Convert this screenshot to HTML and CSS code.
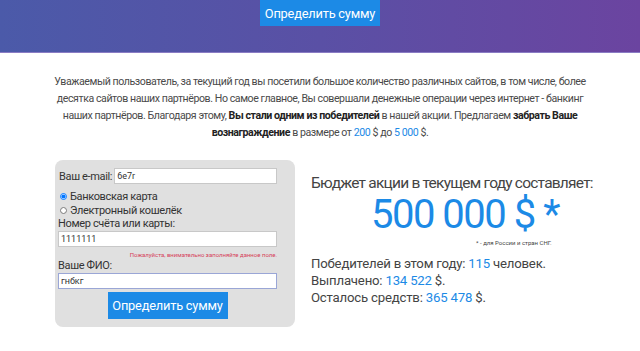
FILE: index.html
```html
<!DOCTYPE html>
<html lang="ru">
<head>
    <meta charset="UTF-8">
    <meta name="viewport" content="width=device-width, initial-scale=1.0">
    <title>Определить сумму</title>
    <link rel="stylesheet" href="styles.css">
</head>
<body>
    <header class="top-band">
        <button class="btn top-btn">Определить сумму</button>
    </header>
    <main>
        <p class="intro">
            Уважаемый пользователь, за текущий год вы посетили большое количество различных сайтов, в том числе, более<br>
            десятка сайтов наших партнёров. Но самое главное, Вы совершали денежные операции через интернет - банкинг<br>
            наших партнёров. Благодаря этому, <strong>Вы стали одним из победителей</strong> в нашей акции. Предлагаем <strong>забрать Ваше</strong><br>
            <strong>вознаграждение</strong> в размере от <span class="blue">200</span> $ до <span class="blue">5 000</span> $.
        </p>
        <div class="content">
            <form class="form-box" onsubmit="return false">
                <div class="row-email">
                    <label>Ваш e-mail:</label>
                    <input type="text" class="field" value="6e7r">
                </div>
                <label class="radio first"><input type="radio" name="pay" checked> Банковская карта</label>
                <label class="radio"><input type="radio" name="pay"> Электронный кошелёк</label>
                <label class="lbl">Номер счёта или карты:</label>
                <input type="text" class="field" value="1111111">
                <div class="error">Пожалуйста, внимательно заполняйте данное поле.</div>
                <label class="lbl">Ваше ФИО:</label>
                <input type="text" class="field focused" value="гнбкг">
                <div class="btn-row">
                    <button class="btn form-btn">Определить сумму</button>
                </div>
            </form>
            <div class="budget">
                <div class="budget-title">Бюджет акции в текущем году составляет:</div>
                <div class="budget-sum">500 000 $ *</div>
                <div class="note">* - для России и стран СНГ.</div>
                <div class="stats">
                    <div class="stat">Победителей в этом году: <span class="blue">115</span> человек.</div>
                    <div class="stat">Выплачено: <span class="blue">134 522</span> $.</div>
                    <div class="stat">Осталось средств: <span class="blue">365 478</span> $.</div>
                </div>
            </div>
        </div>
    </main>
</body>
</html>
```

FILE: styles.css
```css
body {
    font-family: Roboto, 'Noto Sans', sans-serif;
    margin: 0;
    padding: 0;
    background-color: #fff;
    color: #4a4a4a;
}
.top-band {
    height: 52px;
    background: linear-gradient(90deg, #4b5aa9 0%, #5a50a5 50%, #6b44a0 100%);
    border-bottom: 1px solid #8a7cc4;
    display: flex;
    justify-content: center;
    align-items: flex-start;
}
.btn {
    background-color: #1c8ae6;
    color: #fff;
    border: none;
    font-family: inherit;
    cursor: pointer;
    padding: 0;
    letter-spacing: -0.2px;
}
.top-btn {
    width: 120px;
    height: 26px;
    font-size: 12.8px;
}
main {
    padding: 0 40px;
}
.intro {
    margin: 20px 0 0;
    text-align: center;
    font-size: 10.6px;
    letter-spacing: -0.43px;
    line-height: 17px;
    white-space: nowrap;
    color: #4a4a4a;
}
.intro strong {
    color: #222;
    font-weight: 700;
}
.blue {
    color: #1c8ae6;
}
.content {
    display: flex;
    margin-top: 19px;
    padding-left: 15px;
}
.form-box {
    flex: none;
    width: 240px;
    height: 167px;
    box-sizing: border-box;
    background-color: #e0e0e0;
    border-radius: 8px;
    padding: 8px 18px 0 3px;
    font-size: 11px;
    letter-spacing: -0.35px;
    color: #333;
    display: flex;
    flex-direction: column;
}
.row-email {
    display: flex;
    align-items: center;
    padding-left: 1px;
}
.row-email label {
    margin-right: 2px;
}
.field {
    height: 16px;
    box-sizing: border-box;
    border: 1px solid #c8c8c8;
    background: #fff;
    font-family: inherit;
    font-size: 9px;
    letter-spacing: 0;
    padding: 0 2px;
    color: #333;
    flex: none;
    min-width: 0;
}
.row-email .field {
    flex: 1;
}
.field.focused {
    border-color: #9aa6d6;
}
.radio {
    display: flex;
    align-items: center;
    height: 14px;
    padding-left: 1px;
}
.radio.first {
    margin-top: 5px;
}
.radio input {
    width: 7px;
    height: 7px;
    margin: 0 3px 0 1px;
}
.lbl {
    line-height: 14px;
}
.error {
    text-align: right;
    font-size: 6px;
    letter-spacing: 0;
    color: #d6405a;
    height: 9px;
    line-height: 9px;
    margin-top: 3px;
    overflow: hidden;
}
.btn-row {
    display: flex;
    justify-content: center;
    margin-top: 3px;
}
.form-btn {
    width: 120px;
    height: 27px;
    font-size: 12.8px;
}
.budget {
    margin-left: 16px;
    padding-top: 13px;
    color: #444;
    white-space: nowrap;
}
.budget-title {
    font-size: 15.5px;
    letter-spacing: -0.78px;
    line-height: 20px;
}
.budget-sum {
    font-size: 40px;
    letter-spacing: -1.5px;
    line-height: 40px;
    color: #1c8ae6;
    margin: 2px 0 0 60px;
}
.note {
    font-size: 6px;
    margin-left: 165px;
    line-height: 10px;
    margin-top: 3px;
}
.stats {
    margin-top: 7px;
}
.stat {
    font-size: 13.2px;
    letter-spacing: -0.2px;
    line-height: 17px;
}
```
